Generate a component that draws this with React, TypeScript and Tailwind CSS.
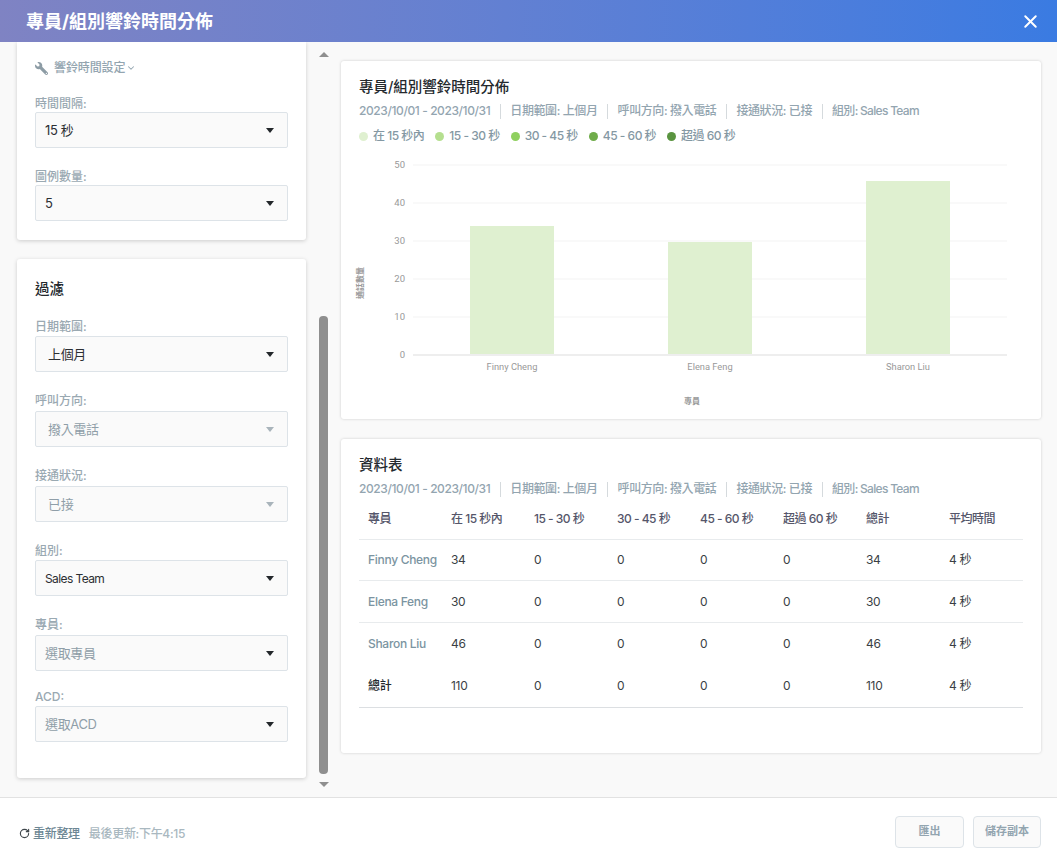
import { ChevronDown, RotateCw, X } from 'lucide-react';
import { FaWrench } from 'react-icons/fa';

const ranges = ['在 15 秒內', '15 - 30 秒', '30 - 45 秒', '45 - 60 秒', '超過 60 秒'];

const legend = [
  { label: ranges[0], color: 'bg-[#dff0d0]' },
  { label: ranges[1], color: 'bg-[#b5df8f]' },
  { label: ranges[2], color: 'bg-[#8fd05f]' },
  { label: ranges[3], color: 'bg-[#6fac4a]' },
  { label: ranges[4], color: 'bg-[#5a9440]' },
];

const filterTags = ['日期範圍: 上個月', '呼叫方向: 撥入電話', '接通狀況: 已接', '組別: Sales Team'];

const rows = [
  { name: 'Finny Cheng', first: 34, total: 34, rowClass: 'h-[41px] border-b border-[#e8ebed]' },
  { name: 'Elena Feng', first: 30, total: 30, rowClass: 'h-[42px] border-b border-[#e8ebed]' },
  { name: 'Sharon Liu', first: 46, total: 46, rowClass: 'h-[42px]' },
];

const bars = [
  { x: 470, top: 226, name: 'Finny Cheng' },
  { x: 668, top: 242, name: 'Elena Feng' },
  { x: 866, top: 181, name: 'Sharon Liu' },
];

function Field({
  label,
  value,
  disabled,
  muted,
  indent,
  small,
  labelClass,
}: {
  label: string;
  value: string;
  disabled?: boolean;
  muted?: boolean;
  indent?: boolean;
  small?: boolean;
  labelClass: string;
}) {
  return (
    <div>
      <div className={`translate-y-[1px] text-[12px] leading-[14px] text-[#9aa9b2] font-medium ${labelClass}`}>{label}</div>
      <div className="h-9 flex items-center justify-between border border-[#dde3e8] bg-[#fafafa] rounded-[2px] pl-[9px] pr-[13px]">
        <span
          className={`pt-[1px] ${small ? 'text-[12px] tracking-[-0.6px]' : 'text-[13px] tracking-[-0.35px]'} ${indent ? 'pl-[3px]' : ''} ${
            disabled || muted ? 'text-[#8f9ea8]' : 'text-[#2c2f33]'
          }`}
        >
          {value}
        </span>
        <span
          className={`w-0 h-0 border-x-[4.5px] border-x-transparent border-t-[5px] ${
            disabled ? 'border-t-[#a9b4bb]' : 'border-t-[#23272b]'
          }`}
        />
      </div>
    </div>
  );
}

function Tags() {
  return (
    <div className="flex items-center text-[12px] tracking-[-0.4px] font-medium text-[#93a5b0] h-[16px]">
      <span>2023/10/01 - 2023/10/31</span>
      {filterTags.map((tag) => (
        <span key={tag} className="flex items-center">
          <span className="w-px h-[15px] bg-[#d5dadd] mx-[9.5px]" />
          <span className={tag.includes('Sales') ? 'tracking-[-0.7px]' : ''}>{tag}</span>
        </span>
      ))}
    </div>
  );
}

function Chart() {
  const lines = [165, 203, 241, 279, 317, 355];
  return (
    <svg className="absolute left-0 top-0" width="700" height="358" viewBox="341 61 700 358">
      {lines.map((y, i) => (
        <g key={y}>
          <line x1="413" x2="1007" y1={y} y2={y} stroke={i === 5 ? '#eeeeee' : '#f3f3f3'} strokeWidth={i === 5 ? 2 : 1} />
          <text x="405" y={y + 3} textAnchor="end" fontSize="9.5" fill="#999999" fontFamily="Roboto, sans-serif">
            {50 - i * 10}
          </text>
        </g>
      ))}
      {bars.map((b) => (
        <g key={b.name}>
          <rect x={b.x} y={b.top} width="84" height={354 - b.top} fill="#dff0d0" />
          <text x={b.x + 42} y="370" textAnchor="middle" fontSize="9.3" fill="#999999" fontFamily="Roboto, sans-serif">
            {b.name}
          </text>
        </g>
      ))}
      <text
        transform="translate(363 283) rotate(-90)"
        textAnchor="middle"
        fontSize="8"
        fontWeight="700"
        fill="#999999"
        fontFamily="'Noto Sans CJK TC', sans-serif"
      >
        通話數量
      </text>
      <text
        x="692"
        y="404"
        textAnchor="middle"
        fontSize="8"
        fontWeight="700"
        fill="#999999"
        fontFamily="'Noto Sans CJK TC', sans-serif"
      >
        專員
      </text>
    </svg>
  );
}

function TableRow({
  name,
  first,
  total,
  nameClass,
  className,
}: {
  name: string;
  first: number;
  total: number;
  nameClass: string;
  className: string;
}) {
  return (
    <div
      className={`grid grid-cols-[repeat(7,83px)_1fr] items-center pl-[9px] text-[12px] tracking-[-0.3px] text-[#3a3f45] ${className}`}
    >
      <span className={`whitespace-nowrap ${nameClass}`}>{name}</span>
      <span>{first}</span>
      <span>0</span>
      <span>0</span>
      <span>0</span>
      <span>0</span>
      <span>{total}</span>
      <span>4 秒</span>
    </div>
  );
}

export default function App() {
  return (
    <div
      className="h-[863px] w-[1057px] overflow-hidden flex flex-col bg-white"
      style={{ fontFamily: "Inter, 'Noto Sans CJK TC', sans-serif" }}
    >
      <header className="h-[42px] shrink-0 flex items-center justify-between pl-[26px] pr-[16px] bg-gradient-to-r from-[#7f83c3] to-[#3a7be2] text-white">
        <h1 className="text-[18px] font-bold">專員/組別響鈴時間分佈</h1>
        <X size={21} strokeWidth={2.25} />
      </header>

      <main className="h-[755px] shrink-0 flex bg-[#f9f9f9] overflow-hidden">
        <div className="w-[316px] shrink-0 pl-[17px] pr-[10px]">
          <div className="h-[198px] bg-white rounded-b-[3px] shadow-[0_1px_4px_rgba(0,0,0,0.18)] px-[18px] pt-[18px]">
            <div className="flex items-center h-[16px] text-[12px] tracking-[-0.1px] font-medium text-[#93a5b0]">
              <FaWrench size={13} className="text-[#8d9ca5] mr-[6px] -scale-x-100" />
              <span>響鈴時間設定</span>
              <ChevronDown size={10} strokeWidth={2.5} className="ml-[1px]" />
            </div>
            <div className="mt-[20px] flex flex-col gap-[21px]">
              <Field label="時間間隔:" value="15 秒" labelClass="pb-[2px]" />
              <Field label="圖例數量:" value="5" labelClass="pb-[2px]" />
            </div>
          </div>

          <div className="mt-[19px] h-[519px] bg-white rounded-[3px] shadow-[0_1px_4px_rgba(0,0,0,0.18)] px-[18px] pt-[20px]">
            <h2 className="text-[14.5px] leading-[20px] font-medium text-[#24292e]">過濾</h2>
            <div className="mt-[20px] flex flex-col gap-[21px]">
              <Field label="日期範圍:" value="上個月" indent labelClass="pb-[3px]" />
              <Field label="呼叫方向:" value="撥入電話" indent disabled labelClass="pb-[4px]" />
              <Field label="接通狀況:" value="已接" indent disabled labelClass="pb-[4px]" />
              <Field label="組別:" value="Sales Team" small labelClass="pb-[3px]" />
              <Field label="專員:" value="選取專員" muted labelClass="pb-[4px]" />
              <div className="-mt-[3px]">
                <Field label="ACD:" value="選取ACD" muted labelClass="pb-[3px]" />
              </div>
            </div>
          </div>
        </div>

        <div className="w-[15px] shrink-0 flex flex-col items-center pt-[10px] pb-[10px]">
          <span className="w-0 h-0 border-x-[5px] border-x-transparent border-b-[5px] border-b-[#8f8f8f]" />
          <div className="flex-1 w-full flex flex-col justify-end items-center pb-[8px]">
            <div className="w-[9px] h-[458px] bg-[#8f8f8f] rounded-b-[4px] rounded-t-[4px]" />
          </div>
          <span className="w-0 h-0 border-x-[5px] border-x-transparent border-t-[5px] border-t-[#8f8f8f]" />
        </div>

        <div className="ml-[10px] w-[700px] shrink-0 pt-[19px] flex flex-col gap-[20px]">
          <section className="relative h-[358px] bg-white rounded-[3px] shadow-[0_0_3px_rgba(0,0,0,0.18)] px-[18px] pt-[16px]">
            <Chart />
            <div className="relative">
              <h2 className="text-[14.5px] leading-[20px] font-medium text-[#24292e]">專員/組別響鈴時間分佈</h2>
              <div className="mt-[6px]">
                <Tags />
              </div>
              <div className="mt-[9px] flex items-center gap-[11px] text-[12px] tracking-[-0.5px] font-medium text-[#8498a3] h-[16px]">
                {legend.map((l) => (
                  <span key={l.label} className="flex items-center gap-[5px]">
                    <span className={`w-[9px] h-[9px] rounded-full ${l.color}`} />
                    <span>{l.label}</span>
                  </span>
                ))}
              </div>
            </div>
          </section>

          <section className="h-[314px] bg-white rounded-[3px] shadow-[0_0_3px_rgba(0,0,0,0.18)] px-[18px] pt-[16px]">
            <h2 className="text-[14.5px] leading-[20px] font-medium text-[#24292e]">資料表</h2>
            <div className="mt-[6px]">
              <Tags />
            </div>
            <div className="mt-[2px] w-[664px]">
              <div className="grid grid-cols-[repeat(7,83px)_1fr] items-center h-[41px] pl-[9px] pb-[1px] text-[12px] tracking-[-0.5px] font-medium text-[#55566a] border-b border-[#e8ebed]">
                <span>專員</span>
                {ranges.map((r) => (
                  <span key={r}>{r}</span>
                ))}
                <span>總計</span>
                <span>平均時間</span>
              </div>
              {rows.map((r) => (
                <TableRow
                  key={r.name}
                  name={r.name}
                  first={r.first}
                  total={r.total}
                  nameClass="text-[#7b94a1] font-medium"
                  className={r.rowClass}
                />
              ))}
              <TableRow
                name="總計"
                first={110}
                total={110}
                nameClass="font-medium text-[#24292e]"
                className="h-[43px] border-b border-[#dcdfe2]"
              />
            </div>
          </section>
        </div>
      </main>

      <footer className="flex-1 flex items-center justify-between border-t border-[#e2e2e2] pl-[19px] pr-[16px]">
        <div className="flex items-center text-[12px] tracking-[-0.3px] font-medium mt-[6px]">
          <RotateCw size={11} strokeWidth={2.5} className="text-[#3f464b] mr-[3px]" />
          <span className="text-[#6d8794]">重新整理</span>
          <span className="ml-[9px] text-[#a9b8c0]">最後更新:下午4:15</span>
        </div>
        <div className="flex gap-[9px] mt-[2px]">
          <button className="w-[69px] h-[32px] border border-[#dde3e8] bg-[#fafafa] rounded-[4px] text-[11px] font-semibold text-[#93a5b0]">
            匯出
          </button>
          <button className="w-[68px] h-[32px] border border-[#dde3e8] bg-[#fafafa] rounded-[4px] text-[11px] font-semibold text-[#93a5b0]">
            儲存副本
          </button>
        </div>
      </footer>
    </div>
  );
}
